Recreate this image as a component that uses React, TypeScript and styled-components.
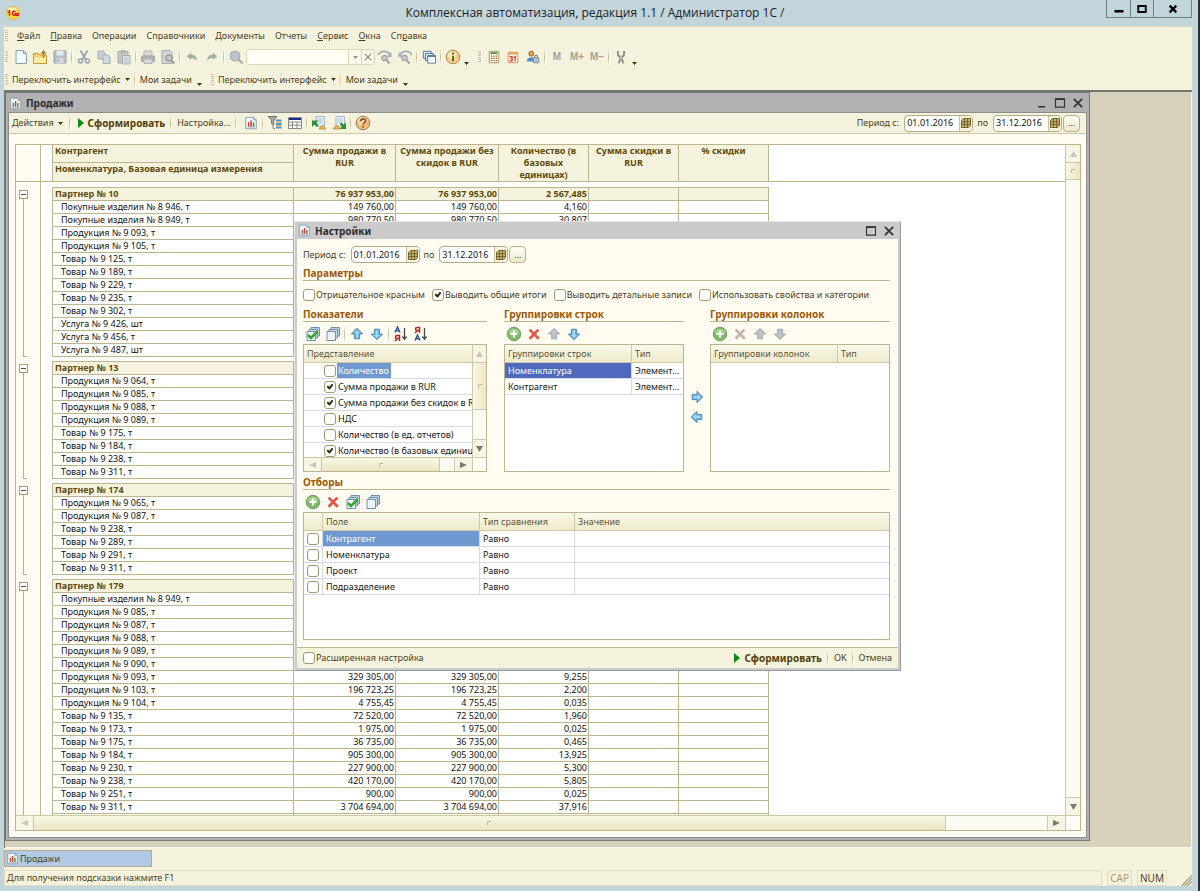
import React from 'react';
import styled, { createGlobalStyle, css } from 'styled-components';

const c = {
  frame: '#c2d5db',
  panel: '#f5f2dd',
  cream: '#fffbf0',
  line: '#bdb590',
  text: '#4b3f1c',
  desk: '#d8d2bd',
  heading: '#9c5a08',
  reportHead: '#5f4a0a',
};

const Global = createGlobalStyle`
  *, *::before, *::after { box-sizing: border-box; }
  body { margin: 0; }
  body, button, input, table { font: 9px/12px "Noto Sans", "Open Sans", sans-serif; color: ${c.text}; }
  button { border: 0; padding: 0; margin: 0; background: none; white-space: nowrap; }
  input { margin: 0; }
  svg { display: block; flex: none; }
  table { border-spacing: 0; table-layout: fixed; }
  th, td { padding: 0; text-align: left; font-weight: 400; white-space: nowrap; overflow: hidden; }
`;

/* ---------- application frame ---------- */

const Page = styled.div`
  display: flex;
  flex-direction: column;
  height: 100vh;
  min-height: 760px;
  padding: 0 6px 5px 4px;
  background: ${c.frame};
  border-right: 2px solid #2c2e31;
  overflow: hidden;
`;
const TitleBar = styled.header`
  display: flex;
  align-items: center;
  height: 26px;
  padding-left: 2px;
`;
const AppTitle = styled.h1`
  flex: 1;
  margin: 0;
  padding-left: 64px;
  font: 12px/24px "Open Sans", "Noto Sans", sans-serif;
  color: #1d2326;
  text-align: center;
`;
const SystemButtons = styled.div`
  display: flex;
  align-self: flex-start;
  border: 1px solid #6d8089;
  border-top: 0;
`;
const SystemButton = styled.button<{ $wide?: boolean }>`
  display: flex;
  align-items: center;
  justify-content: center;
  width: ${p => (p.$wide ? 38 : 23)}px;
  height: 17px;
  & + & { border-left: 1px solid #6d8089; }
`;
const Bars = styled.div`
  display: flex;
  flex-direction: column;
  height: 64px;
  background: ${c.panel};
  border-top: 1px solid #dcd9c4;
`;
const Bar = styled.div<{ $height: number }>`
  display: flex;
  align-items: center;
  height: ${p => p.$height}px;
`;
const Grip = styled.span`
  width: 3px;
  height: 12px;
  margin: 0 4px 0 1px;
  background: repeating-linear-gradient(#c9c3a6 0 1px, ${c.panel} 1px 2px);
`;
const Menu = styled.nav`
  display: flex;
  gap: 10px;
  padding-left: 5px;
`;
const TextButton = styled.button<{ $bold?: boolean }>`
  display: flex;
  align-items: center;
  gap: 4px;
  ${p => p.$bold && css`font-size: 10px; font-weight: 700; color: #54410c;`}
`;
const IconButton = styled.button<{ $width?: number }>`
  display: flex;
  align-items: center;
  justify-content: center;
  width: ${p => p.$width ?? 20}px;
  height: 20px;
`;
const MemoryButton = styled(IconButton)`
  font: 700 10px/12px "Liberation Sans", sans-serif;
  color: #aaa198;
`;
const Sep = styled.span<{ $gap?: number }>`
  width: 2px;
  height: 16px;
  margin: 0 ${p => p.$gap ?? 1}px;
  background: linear-gradient(${c.panel}, #bfb894 50%, ${c.panel});
  border-right: 1px solid #fffdf2;
`;
const LowCaret = styled.span<{ $near?: boolean }>`
  align-self: flex-end;
  margin: 0 8px 4px ${p => (p.$near ? 1 : 5)}px;
`;
const Search = styled.div`
  display: flex;
  width: 129px;
  height: 16px;
  border: 1px solid #ddd7b8;
  border-radius: 3px;
  background: #fbf9ec;
`;
const SearchInput = styled.input`
  flex: 1;
  min-width: 0;
  border: 0;
  padding: 0 3px;
  background: #fffdf4;
`;
const SearchButton = styled.button`
  display: flex;
  align-items: center;
  justify-content: center;
  width: 13px;
  border-left: 1px solid #ddd7b8;
`;

/* ---------- MDI area ---------- */

const Desktop = styled.main`
  position: relative;
  flex: 1;
  min-height: 0;
  background: ${c.desk};
  border: solid #77756f;
  border-width: 2px 0 0 1px;
  box-shadow: inset -1px -1px #f8f7ef;
`;
const DocWindow = styled.section`
  position: absolute;
  inset: 0 102px 7px 0;
  display: flex;
  flex-direction: column;
  padding: 1px 2px 2px;
  background: #b1b1b1;
  border: 1px solid #77797b;
`;
const WindowTitle = styled.h2<{ $height: number }>`
  display: flex;
  align-items: center;
  gap: 4px;
  height: ${p => p.$height}px;
  margin: 0;
  padding: 0 1px;
  font-size: 10px;
  line-height: 12px;
  color: #2b2b2b;
`;
const WindowTools = styled.span`
  display: flex;
  gap: 2px;
  margin-left: auto;
`;
const WindowTool = styled.button`
  display: flex;
  align-items: center;
  justify-content: center;
  width: 16px;
  height: 16px;
`;
const DocInner = styled.div`
  display: flex;
  flex-direction: column;
  flex: 1;
  min-height: 0;
  border: 1px solid #8d8d8d;
  background: ${c.cream};
`;
const DocBar = styled.div`
  display: flex;
  align-items: center;
  height: 21px;
  padding: 0 6px 0 3px;
  background: ${c.panel};
  border-bottom: 1px solid #cfc8a6;
`;
const Period = styled.div<{ $end?: boolean }>`
  display: flex;
  align-items: center;
  gap: 4px;
  ${p => p.$end && css`margin-left: auto;`}
`;
const DateBox = styled.span`
  display: flex;
  width: 69px;
  height: 17px;
  margin-left: 1px;
  border: 1px solid #b5ab85;
  border-radius: 4px;
  background: #fff;
  overflow: hidden;
`;
const DateInput = styled.input`
  flex: 1;
  min-width: 0;
  border: 0;
  padding: 0 0 0 2px;
  background: none;
  color: #151515;
`;
const DateButton = styled.button`
  display: flex;
  align-items: center;
  justify-content: center;
  width: 13px;
  border-left: 1px solid #c9c19c;
  background: #f5f1da;
`;
const MoreButton = styled.button`
  width: 17px;
  height: 17px;
  margin-left: -3px;
  border: 1px solid #bcb389;
  border-radius: 4px;
  background: linear-gradient(#fffef6, #efe9c9);
  line-height: 12px;
`;
const Sheet = styled.div`
  display: grid;
  grid-template: minmax(0, 1fr) 15px / minmax(0, 1fr) 15px;
  flex: 1;
  min-height: 0;
  margin: 10px 5px 6px 6px;
  border: 1px solid ${c.line};
`;
const SheetView = styled.div`
  display: flex;
  min-height: 0;
  overflow: hidden;
  background: #fff;
`;
const Outline = styled.div`
  flex: none;
  width: 25px;
  background: ${c.cream};
  border-right: 1px solid ${c.line};
`;
const OutlineHead = styled.div`
  height: 37px;
  margin-bottom: 5px;
  border-bottom: 1px solid ${c.line};
`;
const OutlineGroup = styled.div<{ $rows: number }>`
  display: flex;
  flex-direction: column;
  height: ${p => p.$rows * 13 + 14}px;
  margin-bottom: 4px;
  padding: 3px 0 0 3px;
`;
const OutlineToggle = styled.button`
  width: 9px;
  height: 9px;
  border: 1px solid #a9a17b;
  background: linear-gradient(#5c5335, #5c5335) center / 5px 1px no-repeat #fff;
`;
const OutlineLine = styled.span`
  flex: 1;
  width: 4px;
  margin-left: 4px;
  border: solid #b9b18d;
  border-width: 0 0 1px 1px;
`;
const Report = styled.table`
  align-self: flex-start;
  flex: 1;
  width: 100%;
  color: #111;
`;
const HeadCell = styled.th<{ $center?: boolean; $blank?: boolean; $first?: boolean; $last?: boolean }>`
  height: ${p => (p.$last ? 19 : 18)}px;
  padding: 0 2px;
  vertical-align: top;
  white-space: normal;
  font-weight: 700;
  color: ${c.reportHead};
  background: ${p => (p.$blank ? '#fff' : c.panel)};
  text-align: ${p => (p.$center ? 'center' : 'left')};
  border: 0 solid ${c.line};
  border-bottom-width: 1px;
  border-right-width: ${p => (p.$blank ? 0 : 1)}px;
  border-left-width: ${p => (p.$first ? 1 : 0)}px;
`;
const Gap = styled.td<{ $height: number }>`
  height: ${p => p.$height}px;
  line-height: 1px;
`;
const DataCell = styled.td<{ $head?: boolean; $name?: boolean }>`
  height: ${p => (p.$head ? 14 : 13)}px;
  padding: ${p => (p.$name ? (p.$head ? '0 2px' : '0 8px') : '0 1px')};
  text-align: ${p => (p.$name ? 'left' : 'right')};
  border: 0 solid ${c.line};
  border-width: ${p => (p.$head ? 1 : 0)}px 1px 1px ${p => (p.$name ? 1 : 0)}px;
  ${p => p.$head && css`background: ${c.panel}; font-weight: 700; color: ${c.reportHead};`}
`;

/* ---------- scroll bars ---------- */

const VBar = styled.div`
  display: flex;
  flex-direction: column;
  min-height: 0;
  border-left: 1px solid #cfc8a6;
  background: #fbfaf3;
`;
const HBar = styled.div`
  display: flex;
  min-width: 0;
  border-top: 1px solid #cfc8a6;
  background: #fbfaf3;
`;
const Corner = styled.div`
  border: solid #cfc8a6;
  border-width: 1px 0 0 1px;
  background: #fdfcf6;
`;
const ScrollButton = styled.button<{ $v?: boolean }>`
  display: flex;
  align-items: center;
  justify-content: center;
  flex: none;
  ${p => (p.$v ? 'height' : 'width')}: 17px;
  background: #f8f5e4;
`;
const Thumb = styled.span<{ $v?: boolean; $size: string }>`
  display: flex;
  align-items: center;
  justify-content: center;
  flex: none;
  ${p => (p.$v ? 'height' : 'width')}: ${p => p.$size};
  background: linear-gradient(${p => (p.$v ? '90deg' : '180deg')}, #faf7e6, #ece5c4);
  border: solid #cfc8a6;
  border-width: ${p => (p.$v ? '1px 0' : '0 1px')};
  &::after { content: ''; width: 4px; height: 4px; border: solid #bdb694; border-width: 1px 0 0 1px; border-radius: 2px 0 0 0; }
`;
const Track = styled.span<{ $v?: boolean }>`
  flex: 1;
  border: solid #cfc8a6;
  border-width: ${p => (p.$v ? '0 0 1px' : '0 1px 0 0')};
`;

/* ---------- settings dialog ---------- */

const Dialog = styled.section`
  position: absolute;
  left: 289px;
  top: 129px;
  display: flex;
  flex-direction: column;
  width: 607px;
  height: 450px;
  padding: 0 2px 2px;
  background: #cbcbcb;
  border: 1px solid #98999b;
  border-top-color: #e4e4e4;
  border-left-color: #e4e4e4;
`;
const DialogBody = styled.div`
  display: flex;
  flex-direction: column;
  flex: 1;
  padding: 7px 8px 7px 6px;
  background: ${c.cream};
`;
const DialogFoot = styled.footer`
  display: flex;
  align-items: center;
  height: 21px;
  padding: 0 6px;
  background: ${c.panel};
  border-top: 1px solid ${c.line};
`;
const FootActions = styled.div`
  display: flex;
  align-items: center;
  margin-left: auto;
`;
const Heading = styled.h3`
  margin: 0;
  height: 13px;
  font-size: 10px;
  line-height: 11px;
  color: ${c.heading};
  border-bottom: 1px solid ${c.line};
`;
const Section = styled.div`
  display: flex;
  flex-direction: column;
  margin-top: 5px;
`;
const Options = styled.div`
  display: flex;
  gap: 7px;
  margin-top: 8px;
`;
const CheckLabel = styled.label`
  display: flex;
  align-items: center;
  gap: 1px;
  white-space: nowrap;
`;
const Check = styled.input.attrs({ type: 'checkbox' })`
  appearance: none;
  position: relative;
  flex: none;
  display: block;
  width: 12px;
  height: 12px;
  border: 1px solid #a39a74;
  border-radius: 3px;
  background: #fff;
  &:checked::after {
    content: '';
    position: absolute;
    left: 3px;
    top: 1px;
    width: 4px;
    height: 6px;
    border: solid #2c2613;
    border-width: 0 2px 2px 0;
    transform: rotate(40deg);
  }
`;
const Lists = styled.div`
  display: grid;
  grid-template-columns: 184px 17px minmax(0, 1fr) 26px minmax(0, 1fr);
  margin-top: 8px;
`;
const Tools = styled.div`
  display: flex;
  align-items: center;
  height: 22px;
  padding-top: 1px;
`;
const ListBox = styled.div`
  height: 128px;
  border: 1px solid ${c.line};
  background: #fff;
  overflow: hidden;
`;
const ScrollBox = styled(ListBox)`
  display: grid;
  grid-template: minmax(0, 1fr) 14px / minmax(0, 1fr) 14px;
`;
const ScrollArea = styled.div`
  overflow: hidden;
`;
const Grid = styled.table`
  width: 100%;
`;
const GridHead = styled.th`
  height: 18px;
  padding: 0 3px;
  color: #5d5230;
  background: linear-gradient(#fbf9ec, #efeacb);
  border-bottom: 1px solid #cfc8a6;
  & + & { border-left: 1px solid #cfc8a6; }
`;
const GridCell = styled.td<{ $selected?: 'light' | 'dark' }>`
  height: 16px;
  padding: 0 3px;
  color: ${p => (p.$selected ? '#fff' : '#141414')};
  background: ${p => (p.$selected === 'dark' ? '#4f69be' : p.$selected ? '#6f97d0' : '#fff')};
  border-bottom: 1px solid #d3dce6;
  text-overflow: ellipsis;
  & + & { border-left: 1px solid #d3dce6; }
`;
const Indicator = styled(CheckLabel)`
  padding-left: 17px;
  height: 15px;
`;
const IndicatorText = styled.span<{ $selected?: boolean }>`
  padding: 0 2px 0 1px;
  line-height: 15px;
  ${p => p.$selected && css`background: #6f97d0; color: #fff;`}
`;
const Movers = styled.div`
  display: flex;
  flex-direction: column;
  justify-content: center;
  align-items: center;
  padding-top: 32px;
`;

/* ---------- bottom bars ---------- */

const TaskBar = styled.div`
  display: flex;
  align-items: center;
  height: 21px;
  background: ${c.panel};
`;
const TaskButton = styled.button`
  display: flex;
  align-items: center;
  gap: 1px;
  width: 148px;
  height: 17px;
  padding: 0 1px;
  background: #b1cbe7;
  border: 1px solid #b3ab8b;
`;
const StatusBar = styled.footer`
  display: flex;
  align-items: center;
  gap: 5px;
  height: 17px;
  background: ${c.panel};
`;
const StatusCell = styled.div<{ $grow?: boolean; $dim?: boolean }>`
  flex: ${p => (p.$grow ? 1 : 'none')};
  height: 16px;
  padding: 0 2px;
  border: 1px solid #e2dec6;
  line-height: 14px;
  font-size: ${p => (p.$grow ? 9 : 10)}px;
  color: ${p => (p.$dim ? '#aa9d6c' : c.text)};
`;
const StatusEnd = styled.div`
  display: flex;
  align-items: flex-end;
  justify-content: flex-end;
  width: 20px;
  height: 16px;
`;

/* ---------- icons ---------- */

type P = { children?: React.ReactNode; size?: number };
const Svg = ({ children, size = 16 }: P) => (
  <svg width={size} height={size} viewBox="0 0 16 16" fill="none" aria-hidden="true">{children}</svg>
);
const Caret = ({ color = '#463a18' }: { color?: string }) => (
  <svg width="5" height="3" viewBox="0 0 5 3" aria-hidden="true"><path d="M0 0h5L2.5 3z" fill={color} /></svg>
);
const Arrow = ({ dir, off }: { dir: 'up' | 'down' | 'left' | 'right'; off?: boolean }) => {
  const d = { up: 'M3 0L6 5H0z', down: 'M3 5L6 0H0z', left: 'M0 2.5L6 0v5z', right: 'M6 2.5L0 0v5z' }[dir];
  return <svg width="7" height="6" viewBox="0 0 6 5" aria-hidden="true"><path d={d} fill={off ? '#c9c6b8' : '#7c7a70'} /></svg>;
};
const Logo = () => (
  <Svg size={14}>
    <circle cx="8" cy="8" r="7.5" fill="#fbd84b" stroke="#d9b13c" />
    <ellipse cx="7" cy="4.5" rx="5" ry="3" fill="#fff0a0" />
    <path d="M2 7l2-1.500V11M11 6.500a2.300 2.300 0 1 0-1.500 4H15M9.500 8.700H15" stroke="#d4201c" strokeWidth="1.600" />
  </Svg>
);
const ChartDoc = ({ size = 13 }: { size?: number }) => (
  <Svg size={size}>
    <path d="M2 1.500h9l3 3v10H2z" fill="#f2f8fc" stroke="#7e9ab0" />
    <path d="M11 1.500v3h3" stroke="#7e9ab0" />
    <path d="M4 12.500h8.500" stroke="#8a98a4" />
    <path d="M4.500 12V7h1.500v5z" fill="#e0342c" /><path d="M7.200 12V5h1.800v7z" fill="#e0342c" /><path d="M10 12V7.500h1.800V12z" fill="#2f9a3a" />
  </Svg>
);
const NewDoc = () => (
  <Svg><path d="M3 1.500h7.500l3 3v10H3z" fill="#f5fafd" stroke="#86a0b4" /><path d="M10.500 1.500v3h3" fill="#cfe0ec" stroke="#86a0b4" /></Svg>
);
const OpenFolder = () => (
  <Svg>
    <path d="M1.500 14.500V4.500h5l1.500 1.500h6.500v8.500z" fill="#f6d36e" stroke="#c49a3a" />
    <path d="M2 14V8.500h12V14z" fill="#ffeba6" /><path d="M11.500 9V2.500M9.300 4.800l2.200-2.800 2.200 2.800" stroke="#a37a1c" strokeWidth="1.300" />
  </Svg>
);
const Save = () => (
  <Svg><path d="M2 2h12v12H2z" fill="#b4bfc7" stroke="#93a1ac" /><path d="M4.500 2h7v4.500h-7z" fill="#e4eaee" /><path d="M4.500 9h7v5h-7z" fill="#d3dbe0" /><path d="M6 10v3" stroke="#93a1ac" strokeWidth="1.500" /></Svg>
);
const Cut = () => (
  <Svg><path d="M4.500 1.500L10 11M11.500 1.500L6 11" stroke="#98a7b2" strokeWidth="1.800" /><circle cx="4.500" cy="12" r="2" stroke="#98a7b2" strokeWidth="1.500" /><circle cx="11.500" cy="12" r="2" stroke="#98a7b2" strokeWidth="1.500" /></Svg>
);
const Copy = () => (
  <Svg><path d="M2 2h5l2 2v6H2z" fill="#c6cfd5" stroke="#a3b0b9" /><path d="M7 6h5l2 2v6.500H7z" fill="#d2d9de" stroke="#a3b0b9" /></Svg>
);
const Paste = () => (
  <Svg><path d="M2 2.500h10V14H2z" fill="#c9c6bd" stroke="#a8aaa8" /><path d="M5 1h4v3H5z" fill="#a9b2b8" /><path d="M6.500 6.500h7.500V15H6.500z" fill="#dde3e6" stroke="#a3b0b9" /><path d="M8 9h4.500M8 11h4.500M8 13h4.500" stroke="#b4bec5" /></Svg>
);
const Print = () => (
  <Svg><path d="M4 2h8v5H4z" fill="#d9dcdc" stroke="#b4b6b4" /><path d="M1.500 7h13v5.500h-13z" fill="#b6b5b2" stroke="#a6a6a4" /><path d="M4 10h8v4.500H4z" fill="#d9dcdc" stroke="#b0b2b0" /></Svg>
);
const Preview = () => (
  <Svg><path d="M2 1.500h8l2 2v11H2z" fill="#cfd5d8" stroke="#a5afb5" /><circle cx="9" cy="9" r="3" fill="#c3cad0" stroke="#a19b96" strokeWidth="1.500" /><path d="M11 11l3.500 3.500" stroke="#a19b96" strokeWidth="2" /></Svg>
);
const Turn = ({ flip }: { flip?: boolean }) => (
  <Svg size={14}><g transform={flip ? 'matrix(-1 0 0 1 16 0)' : undefined}><path d="M2 7l5-4v2.500c4 0 6.500 2 6.500 7C12 10 10 9 7 9v2.500z" fill="#9fb0a6" /></g></Svg>
);
const Lens = () => (
  <Svg><circle cx="7" cy="7" r="4.800" fill="#bcc6d2" stroke="#b5aeae" strokeWidth="1.400" /><path d="M10.500 10.500l4 4" stroke="#b5aaa2" strokeWidth="2.400" /></Svg>
);
const LensTurn = ({ flip }: { flip?: boolean }) => (
  <Svg><g transform={flip ? 'matrix(-1 0 0 1 16 0)' : undefined}><path d="M1.500 6C3 1.500 10 1 13 5.500" stroke="#9db0bc" strokeWidth="1.700" /><path d="M14.500 3v5h-5z" fill="#9db0bc" /></g><circle cx="7.500" cy="9" r="2.700" fill="#c3cad4" stroke="#a9a2a4" strokeWidth="1.200" /><path d="M9.500 11l3 3.500" stroke="#a9a2a4" strokeWidth="2" /></Svg>
);
const Windows = () => (
  <Svg size={14}><path d="M1.500 1.500h9v8h-9z" fill="#dcebf5" stroke="#41718f" /><path d="M4 4h9v8H4z" fill="#dcebf5" stroke="#41718f" /><path d="M6.500 6.500h9v8.500h-9z" fill="#f4fafd" stroke="#41718f" /><path d="M6.500 7h9" stroke="#41718f" strokeWidth="1.600" /></Svg>
);
const Info = () => (
  <Svg><circle cx="8" cy="8" r="6.800" fill="#f6cf86" stroke="#b5853c" /><circle cx="7" cy="6" r="3.800" fill="#fdebbb" /><path d="M8 3.500v2M8 6.800v5.500" stroke="#3d7432" strokeWidth="2" /></Svg>
);
const Help = () => (
  <Svg><circle cx="8" cy="8" r="6.800" fill="#f5bd78" stroke="#8a8270" /><circle cx="7" cy="6" r="4" fill="#fbdcae" /><path d="M5.500 6.500c0-3.500 5-3.300 5-.5C10.500 8 8 7.800 8 9.800M8 11v1.800" stroke="#8c4f1c" strokeWidth="1.600" /></Svg>
);
const Calculator = () => (
  <Svg size={14}><path d="M2.500 1.500h11v13h-11z" fill="#fdf6dc" stroke="#a08e58" /><path d="M4 3.500h8" stroke="#3f9440" strokeWidth="2" /><path d="M4.500 7h1.500M7.300 7h1.500M10 7h1.500M4.500 9.500h1.500M7.300 9.500h1.500M4.500 12h1.500M7.300 12h1.500" stroke="#7c6c3c" strokeWidth="1.400" /><path d="M10 9.500h1.500M10 12h1.500" stroke="#d63c2c" strokeWidth="1.400" /></Svg>
);
const CalendarIcon = () => (
  <Svg size={14}><path d="M2.500 2.500h11v12h-11z" fill="#fffaf0" stroke="#bf9455" /><path d="M3 4h10" stroke="#eaa64c" strokeWidth="2.500" /><path d="M4 7.500h3v5H4M5 10h2M9 8.500l1.500-1v5.500" stroke="#d9301e" strokeWidth="1.300" /></Svg>
);
const UserLock = () => (
  <Svg size={14}><circle cx="6" cy="4.200" r="2.800" fill="#eda548" stroke="#8c5a1c" /><path d="M1 13c0-6 9-6 9-1v1z" fill="#4f90c4" /><path d="M8.500 9h6v5.500h-6z" fill="#cfd8de" stroke="#66798a" /><path d="M9.800 9V7.500c0-2 3.400-2 3.400 0V9M11.500 11v2" stroke="#66798a" strokeWidth="1.200" /></Svg>
);
const Wrench = () => (
  <Svg size={14}><path d="M4.500 1v3.500a3.500 3.300 0 0 0 7 0V1" stroke="#8f8f8f" strokeWidth="2.200" /><path d="M8 7v5" stroke="#8f8f8f" strokeWidth="4" /><path d="M8 7.500v4" stroke="#d6d6d6" strokeWidth="1.600" /><path d="M5.800 15.500v-2a2.200 2 0 0 1 4.400 0v2" stroke="#8f8f8f" strokeWidth="2" /></Svg>
);
const Play = () => (
  <svg width="7" height="12" viewBox="0 0 7 12" aria-hidden="true"><path d="M1 1l6 5-6 5z" fill="#0b8a12" /></svg>
);
const FilterTree = () => (
  <Svg><path d="M1 1.500h9L6.800 5v5L4.500 8.500V5z" fill="#a9abac" stroke="#747672" /><path d="M9 5.500h5.500M9 9h5.500M9 12.500h5.500" stroke="#4e95c8" strokeWidth="2" /><path d="M9 7h5.500M9 10.500h5.500" stroke="#e8a14a" /><path d="M6 8v5.500h2" stroke="#8c8c86" /></Svg>
);
const HeaderTable = () => (
  <Svg><path d="M1.500 2.500h13v11h-13z" fill="#fff" stroke="#8a8a8a" /><path d="M2 4h12" stroke="#1b2a8c" strokeWidth="2" /><path d="M1.500 7h13M1.500 10.200h13M5.500 7v6.500M10 7v6.500" stroke="#8a8a8a" /></Svg>
);
const Exchange = ({ save }: { save?: boolean }) => (
  <Svg>
    <path d="M5 1.500h8.500v10H5z" fill="#e4eff6" stroke="#a3bac9" /><path d="M7 4h4.500M7 6h4.500M7 8h4.500" stroke="#b0c3d0" />
    {save ? (
      <>
        <path d="M2 14l3.500-4L9 14z" fill="#e8b647" stroke="#c99a3a" />
        <path d="M15 14V7.500l-2.200 2.200L10.500 7.500 8.800 9.200l2.200 2.300L8.500 14z" fill="#2b9133" />
      </>
    ) : (
      <>
        <path d="M8 14l3.500-4L15 14z" fill="#e8b647" stroke="#c99a3a" />
        <path d="M1 5.500h6.500L5.300 7.700 7.500 10l-1.700 1.700-2.300-2.200L1 12z" fill="#2b9133" />
      </>
    )}
  </Svg>
);
const Cal = () => (
  <svg width="10" height="10" viewBox="0 0 10 10" fill="none" aria-hidden="true"><path d="M3 .5h6.500v7l-2 2H.5v-7z" fill="#c8b777" stroke="#75632c" /><path d="M3.500 1v8M6.500 1v8M1 3.800h8.500M1 6.500h8" stroke="#75632c" /></svg>
);
const Stack = ({ check }: { check?: boolean }) => (
  <Svg><path d="M6 1.500h8.500V10H6z" fill="#b9d0e0" stroke="#6f91ab" /><path d="M4 3.500h8.500V12H4z" fill="#cbdde9" stroke="#6f91ab" /><path d="M2 5.500h8.500v9H2z" fill="#eef5f9" stroke="#6f91ab" />{check && <path d="M3 9l3 3 6.500-6.500" stroke="#35a32a" strokeWidth="2.600" />}</Svg>
);
const Move = ({ rot, off }: { rot: number; off?: boolean }) => (
  <Svg size={14}><g transform={`rotate(${rot} 8 8)`}><path d="M8 1.500L14.500 8H11v5.500H5V8H1.500z" fill={off ? '#b3bbc2' : '#6fb4df'} stroke={off ? '#a3abb2' : '#4583ab'} /><path d="M8 3.500L11.500 7H9.500v5H7V7H5z" fill={off ? '#c0c7cc' : '#a5d8f2'} /></g></Svg>
);
const SortIcon = ({ desc }: { desc?: boolean }) => (
  <Svg>
    <g transform={desc ? 'translate(0 8)' : undefined}><path d="M2 6.500L4.500 1 7 6.500M3 4.800h3" stroke="#2a5b8c" strokeWidth="1.500" /></g>
    <g transform={desc ? 'translate(0 -8)' : undefined}><path d="M6.500 15V9.500H4c-2 0-2 3 0 3h2.500M4.500 12.500L2 15" stroke="#b02a22" strokeWidth="1.500" /></g>
    <path d="M11.500 2v11M9.300 10.500l2.200 2.800 2.200-2.800" stroke="#4b4b4b" strokeWidth="1.300" />
  </Svg>
);
const Add = () => (
  <Svg><circle cx="8" cy="8" r="6.800" fill="#7dbb65" stroke="#7d9a72" /><path d="M2.500 7a5.600 5 0 0 1 11 0z" fill="#a5d392" /><path d="M8 4.500v7M4.500 8h7" stroke="#fff" strokeWidth="2.200" /></Svg>
);
const Del = ({ off }: { off?: boolean }) => (
  <Svg size={14}><path d="M3 3l10.500 10.500M13 3L3 13.500" stroke={off ? '#c6b5ad' : '#e2574a'} strokeWidth="3.200" /></Svg>
);
const Minimize = () => <Svg size={12}><path d="M3 13h9" stroke="#2b2b2b" strokeWidth="2" /></Svg>;
const Maximize = () => <Svg size={12}><path d="M2 2.500h12v11H2z" stroke="#333" strokeWidth="1.500" /><path d="M2 3h12" stroke="#333" strokeWidth="2" /></Svg>;
const Close = () => <Svg size={12}><path d="M2.500 2.500l11 11M13.500 2.500l-11 11" stroke="#333" strokeWidth="2.300" /></Svg>;

/* ---------- data ---------- */

type Row = [string, string?, string?, string?];
const groups: { head: Row; rows: Row[] }[] = [
  {
    head: ['Партнер № 10', '76 937 953,00', '76 937 953,00', '2 567,485'],
    rows: [
      ['Покупные изделия № 8 946, т', '149 760,00', '149 760,00', '4,160'],
      ['Покупные изделия № 8 949, т', '980 770,50', '980 770,50', '30,807'],
      ['Продукция № 9 093, т'], ['Продукция № 9 105, т'], ['Товар № 9 125, т'], ['Товар № 9 189, т'],
      ['Товар № 9 229, т'], ['Товар № 9 235, т'], ['Товар № 9 302, т'], ['Услуга № 9 426, шт'],
      ['Услуга № 9 456, т'], ['Услуга № 9 487, шт'],
    ],
  },
  {
    head: ['Партнер № 13'],
    rows: [
      ['Продукция № 9 064, т'], ['Продукция № 9 085, т'], ['Продукция № 9 088, т'], ['Продукция № 9 089, т'],
      ['Товар № 9 175, т'], ['Товар № 9 184, т'], ['Товар № 9 238, т'], ['Товар № 9 311, т'],
    ],
  },
  {
    head: ['Партнер № 174'],
    rows: [
      ['Продукция № 9 065, т'], ['Продукция № 9 087, т'], ['Товар № 9 238, т'], ['Товар № 9 289, т'],
      ['Товар № 9 291, т'], ['Товар № 9 311, т'],
    ],
  },
  {
    head: ['Партнер № 179'],
    rows: [
      ['Покупные изделия № 8 949, т'], ['Продукция № 9 085, т'], ['Продукция № 9 087, т'],
      ['Продукция № 9 088, т'], ['Продукция № 9 089, т'], ['Продукция № 9 090, т'],
      ['Продукция № 9 093, т', '329 305,00', '329 305,00', '9,255'],
      ['Продукция № 9 103, т', '196 723,25', '196 723,25', '2,200'],
      ['Продукция № 9 104, т', '4 755,45', '4 755,45', '0,035'],
      ['Товар № 9 135, т', '72 520,00', '72 520,00', '1,960'],
      ['Товар № 9 173, т', '1 975,00', '1 975,00', '0,025'],
      ['Товар № 9 175, т', '36 735,00', '36 735,00', '0,465'],
      ['Товар № 9 184, т', '905 300,00', '905 300,00', '13,925'],
      ['Товар № 9 230, т', '227 900,00', '227 900,00', '5,300'],
      ['Товар № 9 238, т', '420 170,00', '420 170,00', '5,805'],
      ['Товар № 9 251, т', '900,00', '900,00', '0,025'],
      ['Товар № 9 311, т', '3 704 694,00', '3 704 694,00', '37,916'],
      ['Товар № 9 321, т', '165 630,00', '165 630,00', '2,360'],
    ],
  },
];
const menu: [string, string, string][] = [
  ['', 'Ф', 'айл'], ['', 'П', 'равка'], ['Операции', '', ''], ['Справочники', '', ''], ['Документы', '', ''],
  ['Отчеты', '', ''], ['', 'С', 'ервис'], ['', 'О', 'кна'], ['Сп', 'р', 'авка'],
];
const indicators: [string, boolean][] = [
  ['Количество', false], ['Сумма продажи в RUR', true], ['Сумма продажи без скидок в RUR', true],
  ['НДС', false], ['Количество (в ед. отчетов)', false], ['Количество (в базовых единицах)', true],
];
const filters = ['Контрагент', 'Номенклатура', 'Проект', 'Подразделение'];
const options: [string, boolean][] = [
  ['Отрицательное красным', false], ['Выводить общие итоги', true],
  ['Выводить детальные записи', false], ['Использовать свойства и категории', false],
];

/* ---------- parts ---------- */

const ReportRow = ({ row, head }: { row: Row; head?: boolean }) => (
  <tr>
    <td />
    <DataCell $name $head={head}>{row[0]}</DataCell>
    {[1, 2, 3, 4, 5].map(i => <DataCell key={i} $head={head}>{row[i] as string}</DataCell>)}
    <td />
  </tr>
);
const PeriodFields = ({ end }: { end?: boolean }) => (
  <Period $end={end}>
    <span>Период с:</span>
    <DateBox><DateInput aria-label="Период с" defaultValue="01.01.2016" /><DateButton aria-label="Календарь"><Cal /></DateButton></DateBox>
    <span>по</span>
    <DateBox><DateInput aria-label="Период по" defaultValue="31.12.2016" /><DateButton aria-label="Календарь"><Cal /></DateButton></DateBox>
    <MoreButton>...</MoreButton>
  </Period>
);
const SwitchBar = () => (
  <>
    <Grip />
    <TextButton>Переключить интерфейс <Caret /></TextButton>
    <Sep $gap={4} />
    <TextButton>Мои задачи</TextButton>
    <LowCaret><Caret /></LowCaret>
  </>
);
const GroupingTools = ({ off }: { off?: boolean }) => (
  <Tools>
    <IconButton aria-label="Добавить"><Add /></IconButton>
    <IconButton aria-label="Удалить"><Del off={off} /></IconButton>
    <IconButton aria-label="Вверх"><Move rot={0} off /></IconButton>
    <IconButton aria-label="Вниз"><Move rot={180} off={off} /></IconButton>
  </Tools>
);

const SettingsDialog = () => (
  <Dialog role="dialog" aria-label="Настройки">
    <WindowTitle $height={17}>
      <ChartDoc />Настройки
      <WindowTools>
        <WindowTool aria-label="Развернуть"><Maximize /></WindowTool>
        <WindowTool aria-label="Закрыть"><Close /></WindowTool>
      </WindowTools>
    </WindowTitle>
    <DialogBody>
      <PeriodFields />
      <Section>
        <Heading>Параметры</Heading>
        <Options>
          {options.map(([label, on]) => (
            <CheckLabel key={label}><Check defaultChecked={on} />{label}</CheckLabel>
          ))}
        </Options>
      </Section>
      <Lists>
        <div>
          <Heading>Показатели</Heading>
          <Tools>
            <IconButton aria-label="Отметить все"><Stack check /></IconButton>
            <IconButton aria-label="Снять отметки"><Stack /></IconButton>
            <Sep />
            <IconButton aria-label="Вверх"><Move rot={0} /></IconButton>
            <IconButton aria-label="Вниз"><Move rot={180} /></IconButton>
            <Sep />
            <IconButton aria-label="По возрастанию"><SortIcon /></IconButton>
            <IconButton aria-label="По убыванию"><SortIcon desc /></IconButton>
          </Tools>
          <ScrollBox>
            <ScrollArea>
              <Grid>
                <thead><tr><GridHead>Представление</GridHead></tr></thead>
                <tbody>
                  {indicators.map(([label, on], i) => (
                    <tr key={label}>
                      <GridCell>
                        <Indicator><Check defaultChecked={on} /><IndicatorText $selected={i === 0}>{label}</IndicatorText></Indicator>
                      </GridCell>
                    </tr>
                  ))}
                </tbody>
              </Grid>
            </ScrollArea>
            <VBar>
              <ScrollButton $v aria-label="Вверх"><Arrow dir="up" off /></ScrollButton>
              <Thumb $v $size="48px" />
              <Track $v />
              <ScrollButton $v aria-label="Вниз"><Arrow dir="down" /></ScrollButton>
            </VBar>
            <HBar>
              <ScrollButton aria-label="Влево"><Arrow dir="left" off /></ScrollButton>
              <Thumb $size="119px" />
              <Track />
              <ScrollButton aria-label="Вправо"><Arrow dir="right" /></ScrollButton>
            </HBar>
            <Corner />
          </ScrollBox>
        </div>
        <span />
        <div>
          <Heading>Группировки строк</Heading>
          <GroupingTools />
          <ListBox>
            <Grid>
              <colgroup><col /><col width="52" /></colgroup>
              <thead><tr><GridHead>Группировки строк</GridHead><GridHead>Тип</GridHead></tr></thead>
              <tbody>
                <tr><GridCell $selected="dark">Номенклатура</GridCell><GridCell>Элемент...</GridCell></tr>
                <tr><GridCell>Контрагент</GridCell><GridCell>Элемент...</GridCell></tr>
              </tbody>
            </Grid>
          </ListBox>
        </div>
        <Movers>
          <IconButton aria-label="В колонки"><Move rot={90} /></IconButton>
          <IconButton aria-label="В строки"><Move rot={270} /></IconButton>
        </Movers>
        <div>
          <Heading>Группировки колонок</Heading>
          <GroupingTools off />
          <ListBox>
            <Grid>
              <colgroup><col /><col width="52" /></colgroup>
              <thead><tr><GridHead>Группировки колонок</GridHead><GridHead>Тип</GridHead></tr></thead>
            </Grid>
          </ListBox>
        </div>
      </Lists>
      <Section>
        <Heading>Отборы</Heading>
        <Tools>
          <IconButton aria-label="Добавить"><Add /></IconButton>
          <IconButton aria-label="Удалить"><Del /></IconButton>
          <IconButton aria-label="Отметить все"><Stack check /></IconButton>
          <IconButton aria-label="Снять отметки"><Stack /></IconButton>
        </Tools>
        <ListBox>
          <Grid>
            <colgroup><col width="18" /><col width="157" /><col width="95" /><col /></colgroup>
            <thead>
              <tr><GridHead /><GridHead>Поле</GridHead><GridHead>Тип сравнения</GridHead><GridHead>Значение</GridHead></tr>
            </thead>
            <tbody>
              {filters.map((name, i) => (
                <tr key={name}>
                  <GridCell><Check aria-label={name} /></GridCell>
                  <GridCell $selected={i === 0 ? 'light' : undefined}>{name}</GridCell>
                  <GridCell>Равно</GridCell>
                  <GridCell />
                </tr>
              ))}
            </tbody>
          </Grid>
        </ListBox>
      </Section>
    </DialogBody>
    <DialogFoot>
      <CheckLabel><Check />Расширенная настройка</CheckLabel>
      <FootActions>
        <TextButton $bold><Play />Сформировать</TextButton>
        <Sep $gap={5} />
        <TextButton>OK</TextButton>
        <Sep $gap={5} />
        <TextButton>Отмена</TextButton>
      </FootActions>
    </DialogFoot>
  </Dialog>
);

export default function App() {
  return (
    <Page>
      <Global />
      <TitleBar>
        <Logo />
        <AppTitle>Комплексная автоматизация, редакция 1.1 / Администратор 1С /</AppTitle>
        <SystemButtons>
          <SystemButton aria-label="Свернуть"><Svg size={12}><path d="M2 11h12" stroke="#000" strokeWidth="3.500" /></Svg></SystemButton>
          <SystemButton aria-label="Развернуть"><Svg size={12}><path d="M3 4h10v8H3z" stroke="#000" strokeWidth="2.500" /></Svg></SystemButton>
          <SystemButton $wide aria-label="Закрыть"><Svg size={12}><path d="M3.500 3.500l9 9M12.500 3.500l-9 9" stroke="#000" strokeWidth="3" /></Svg></SystemButton>
        </SystemButtons>
      </TitleBar>
      <Bars>
        <Bar $height={18}>
          <Grip />
          <Menu>
            {menu.map(([a, u, b]) => <TextButton key={a + u + b}><span>{a}<u>{u}</u>{b}</span></TextButton>)}
          </Menu>
        </Bar>
        <Bar $height={24}>
          <Grip />
          <IconButton $width={18} aria-label="Создать"><NewDoc /></IconButton>
          <IconButton aria-label="Открыть"><OpenFolder /></IconButton>
          <IconButton aria-label="Сохранить"><Save /></IconButton>
          <Sep />
          <IconButton aria-label="Вырезать"><Cut /></IconButton>
          <IconButton aria-label="Копировать"><Copy /></IconButton>
          <IconButton aria-label="Вставить"><Paste /></IconButton>
          <Sep />
          <IconButton aria-label="Печать"><Print /></IconButton>
          <IconButton aria-label="Просмотр"><Preview /></IconButton>
          <Sep />
          <IconButton aria-label="Отменить"><Turn /></IconButton>
          <IconButton aria-label="Повторить"><Turn flip /></IconButton>
          <Sep />
          <IconButton aria-label="Найти"><Lens /></IconButton>
          <Search>
            <SearchInput aria-label="Строка поиска" />
            <SearchButton aria-label="История поиска"><Caret color="#9a947c" /></SearchButton>
            <SearchButton aria-label="Очистить"><Svg size={10}><path d="M3 3l10 10M13 3L3 13" stroke="#8f8a76" strokeWidth="2" /></Svg></SearchButton>
          </Search>
          <IconButton aria-label="Найти далее"><LensTurn /></IconButton>
          <IconButton aria-label="Найти ранее"><LensTurn flip /></IconButton>
          <Sep />
          <IconButton aria-label="Окна"><Windows /></IconButton>
          <Sep />
          <IconButton aria-label="Справка"><Info /></IconButton>
          <LowCaret $near><Caret /></LowCaret>
          <Grip />
          <IconButton $width={18} aria-label="Калькулятор"><Calculator /></IconButton>
          <IconButton aria-label="Календарь"><CalendarIcon /></IconButton>
          <IconButton aria-label="Пользователь"><UserLock /></IconButton>
          <Sep />
          <MemoryButton>M</MemoryButton>
          <MemoryButton>M+</MemoryButton>
          <MemoryButton>M−</MemoryButton>
          <Sep />
          <IconButton aria-label="Сервис"><Wrench /></IconButton>
          <LowCaret $near><Caret /></LowCaret>
        </Bar>
        <Bar $height={21}><SwitchBar /><SwitchBar /></Bar>
      </Bars>
      <Desktop>
        <DocWindow aria-label="Продажи">
          <WindowTitle $height={18}>
            <ChartDoc />Продажи
            <WindowTools>
              <WindowTool aria-label="Свернуть"><Minimize /></WindowTool>
              <WindowTool aria-label="Развернуть"><Maximize /></WindowTool>
              <WindowTool aria-label="Закрыть"><Close /></WindowTool>
            </WindowTools>
          </WindowTitle>
          <DocInner>
            <DocBar>
              <TextButton>Действия <Caret /></TextButton>
              <Sep $gap={6} />
              <TextButton $bold><Play />Сформировать</TextButton>
              <Sep $gap={5} />
              <TextButton>Настройка...</TextButton>
              <Sep $gap={4} />
              <IconButton aria-label="Отчет"><ChartDoc size={14} /></IconButton>
              <Sep />
              <IconButton aria-label="Отбор"><FilterTree /></IconButton>
              <IconButton aria-label="Заголовок"><HeaderTable /></IconButton>
              <Sep />
              <IconButton aria-label="Восстановить"><Exchange /></IconButton>
              <IconButton aria-label="Сохранить"><Exchange save /></IconButton>
              <Sep />
              <IconButton aria-label="Помощь"><Help /></IconButton>
              <PeriodFields end />
            </DocBar>
            <Sheet>
              <SheetView>
                <Outline>
                  <OutlineHead />
                  {groups.map(g => (
                    <OutlineGroup key={g.head[0]} $rows={g.rows.length}>
                      <OutlineToggle aria-label={`Свернуть ${g.head[0]}`} />
                      <OutlineLine />
                    </OutlineGroup>
                  ))}
                </Outline>
                <Report>
                  <colgroup>
                    <col width="11" /><col width="242" /><col width="102" /><col width="103" /><col width="90" />
                    <col width="90" /><col width="90" /><col />
                  </colgroup>
                  <thead>
                    <tr>
                      <HeadCell as="td" rowSpan={2} $blank />
                      <HeadCell $first>Контрагент</HeadCell>
                      <HeadCell rowSpan={2} $center>Сумма продажи в RUR</HeadCell>
                      <HeadCell rowSpan={2} $center>Сумма продажи без скидок в RUR</HeadCell>
                      <HeadCell rowSpan={2} $center>Количество (в базовых единицах)</HeadCell>
                      <HeadCell rowSpan={2} $center>Сумма скидки в RUR</HeadCell>
                      <HeadCell rowSpan={2} $center>% скидки</HeadCell>
                      <HeadCell as="td" rowSpan={2} $blank />
                    </tr>
                    <tr><HeadCell $first $last>Номенклатура, Базовая единица измерения</HeadCell></tr>
                  </thead>
                  {groups.map((g, i) => (
                    <tbody key={g.head[0]}>
                      <tr><Gap colSpan={8} $height={i === 0 ? 5 : 4} /></tr>
                      <ReportRow row={g.head} head />
                      {g.rows.map(r => <ReportRow key={r[0]} row={r} />)}
                    </tbody>
                  ))}
                </Report>
              </SheetView>
              <VBar>
                <ScrollButton $v aria-label="Вверх"><Arrow dir="up" off /></ScrollButton>
                <Thumb $v $size="18px" />
                <Track $v />
                <ScrollButton $v aria-label="Вниз"><Arrow dir="down" /></ScrollButton>
              </VBar>
              <HBar>
                <ScrollButton aria-label="Влево"><Arrow dir="left" off /></ScrollButton>
                <Thumb $size="87%" />
                <Track />
                <ScrollButton aria-label="Вправо"><Arrow dir="right" /></ScrollButton>
              </HBar>
              <Corner />
            </Sheet>
          </DocInner>
        </DocWindow>
        <SettingsDialog />
      </Desktop>
      <TaskBar><TaskButton><ChartDoc />Продажи</TaskButton></TaskBar>
      <StatusBar>
        <StatusCell $grow>Для получения подсказки нажмите F1</StatusCell>
        <StatusCell $dim>CAP</StatusCell>
        <StatusCell>NUM</StatusCell>
        <StatusEnd><Svg size={12}><path d="M2 16L16 2M6 16L16 6M10 16l6-6" stroke="#a39a74" strokeWidth="1.500" /></Svg></StatusEnd>
      </StatusBar>
    </Page>
  );
}
